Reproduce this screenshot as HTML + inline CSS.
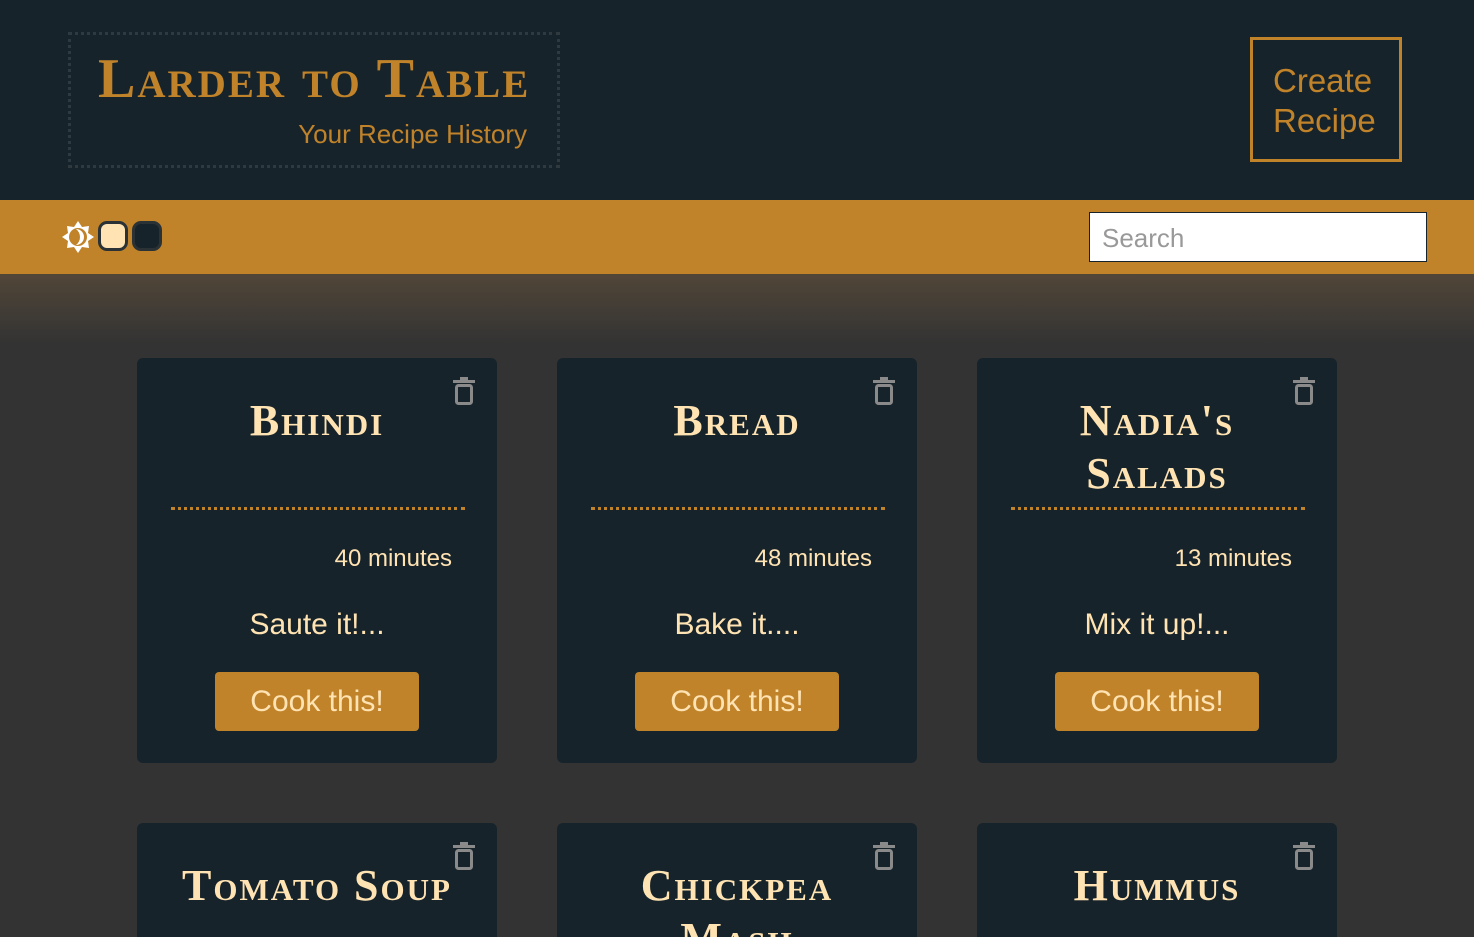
<!DOCTYPE html>
<html><head><meta charset="utf-8"><style>
*{margin:0;padding:0;box-sizing:border-box}
html,body{width:1474px;height:937px;overflow:hidden}
body{background:#333333;font-family:"Liberation Sans",sans-serif;position:relative}
.hdr{position:absolute;left:0;top:0;width:1474px;height:200px;background:#17232a}
.logo{position:absolute;left:68px;top:32px;width:492px;height:136px;border:3px dotted #2f3a40}
.logo h1{position:absolute;left:27px;top:14px;font-family:"Liberation Serif",serif;font-variant:small-caps;font-weight:bold;font-size:56px;line-height:60px;color:#c0832a;white-space:nowrap;letter-spacing:2px}
.logo p{position:absolute;right:30px;top:84px;font-size:26px;color:#c0832a}
.create{position:absolute;left:1250px;top:37px;width:152px;height:125px;border:3px solid #c0832a;color:#c0832a;font-size:33px;line-height:40px;padding:21px 0 0 20px}
.bar{position:absolute;left:0;top:200px;width:1474px;height:74px;background:#c0832a}
.shade{position:absolute;left:0;top:274px;width:1474px;height:70px;background:linear-gradient(#514638,#333333)}
.search{position:absolute;left:1089px;top:212px;width:338px;height:50px;background:#fff;border:1px solid #17232a;font-size:26px;color:#999;padding:10px 12px}
.sw{position:absolute;top:221px;width:30px;height:30px;border-radius:9px;border:3px solid #2a3236}
.card{position:absolute;width:360px;height:405px;background:#17232a;border-radius:6px;overflow:hidden}
.card.b{height:114px;border-radius:6px 6px 0 0}
.card h2{position:absolute;left:0;top:36px;width:360px;text-align:center;font-family:"Liberation Serif",serif;font-variant:small-caps;font-weight:bold;font-size:44px;line-height:53px;letter-spacing:2px;color:#ffe3b3}
.dots{position:absolute;left:34px;top:149px;width:294px;border-top:3px dotted #c0832a}
.min{position:absolute;right:45px;top:187px;font-size:24px;color:#ffe3b3}
.desc{position:absolute;left:0;top:250px;width:360px;text-align:center;font-size:30px;color:#ffe3b3}
.btn{position:absolute;left:78px;top:314px;width:204px;height:59px;background:#c0832a;border-radius:4px;color:#ffe3b3;font-size:30px;text-align:center;line-height:59px}
.trash{position:absolute;left:316px;top:19px}
</style></head><body>
<div class="hdr">
<div class="logo"><h1>Larder to Table</h1><p>Your Recipe History</p></div>
<div class="create">Create<br>Recipe</div>
</div>
<div class="shade"></div>
<div class="bar"></div>
<svg style="position:absolute;left:61px;top:220px" width="34" height="34" viewBox="0 0 34 34"><polygon points="17,1 21,7 28,6 27,13 33,17 27,21 28,28 21,27 17,33 13,27 6,28 7,21 1,17 7,13 6,6 13,7" fill="#fff"/><circle cx="17" cy="17" r="9" fill="#c0832a"/><path d="M15,9 A8,8 0 0 1 15,25 A10,10 0 0 0 15,9Z" fill="#fff"/></svg>
<div class="sw" style="left:98px;background:#ffe3b3"></div>
<div class="sw" style="left:132px;background:#17232a"></div>
<div class="search">Search</div>

<div class="card" style="left:137px;top:358px"><svg class="trash" width="22" height="28" viewBox="0 0 22 28"><rect x="0" y="3" width="22" height="3" fill="#8a8a8a"/><rect x="7" y="0" width="8" height="3" fill="#8a8a8a"/><rect x="3.5" y="8.5" width="15" height="18" rx="2" fill="none" stroke="#8a8a8a" stroke-width="3"/></svg><h2>Bhindi</h2><div class="dots"></div><div class="min">40 minutes</div><div class="desc">Saute it!...</div><div class="btn">Cook this!</div></div>
<div class="card" style="left:557px;top:358px"><svg class="trash" width="22" height="28" viewBox="0 0 22 28"><rect x="0" y="3" width="22" height="3" fill="#8a8a8a"/><rect x="7" y="0" width="8" height="3" fill="#8a8a8a"/><rect x="3.5" y="8.5" width="15" height="18" rx="2" fill="none" stroke="#8a8a8a" stroke-width="3"/></svg><h2>Bread</h2><div class="dots"></div><div class="min">48 minutes</div><div class="desc">Bake it....</div><div class="btn">Cook this!</div></div>
<div class="card" style="left:977px;top:358px"><svg class="trash" width="22" height="28" viewBox="0 0 22 28"><rect x="0" y="3" width="22" height="3" fill="#8a8a8a"/><rect x="7" y="0" width="8" height="3" fill="#8a8a8a"/><rect x="3.5" y="8.5" width="15" height="18" rx="2" fill="none" stroke="#8a8a8a" stroke-width="3"/></svg><h2>Nadia's<br>Salads</h2><div class="dots"></div><div class="min">13 minutes</div><div class="desc">Mix it up!...</div><div class="btn">Cook this!</div></div>

<div class="card b" style="left:137px;top:823px"><svg class="trash" width="22" height="28" viewBox="0 0 22 28"><rect x="0" y="3" width="22" height="3" fill="#8a8a8a"/><rect x="7" y="0" width="8" height="3" fill="#8a8a8a"/><rect x="3.5" y="8.5" width="15" height="18" rx="2" fill="none" stroke="#8a8a8a" stroke-width="3"/></svg><h2>Tomato Soup</h2></div>
<div class="card b" style="left:557px;top:823px"><svg class="trash" width="22" height="28" viewBox="0 0 22 28"><rect x="0" y="3" width="22" height="3" fill="#8a8a8a"/><rect x="7" y="0" width="8" height="3" fill="#8a8a8a"/><rect x="3.5" y="8.5" width="15" height="18" rx="2" fill="none" stroke="#8a8a8a" stroke-width="3"/></svg><h2>Chickpea<br>Mash</h2></div>
<div class="card b" style="left:977px;top:823px"><svg class="trash" width="22" height="28" viewBox="0 0 22 28"><rect x="0" y="3" width="22" height="3" fill="#8a8a8a"/><rect x="7" y="0" width="8" height="3" fill="#8a8a8a"/><rect x="3.5" y="8.5" width="15" height="18" rx="2" fill="none" stroke="#8a8a8a" stroke-width="3"/></svg><h2>Hummus</h2></div>
</body></html>
